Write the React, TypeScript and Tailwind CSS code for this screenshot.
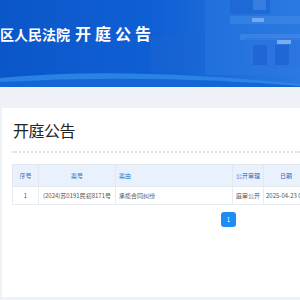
const rows = [
  { no: "1", caseNo: "(2024)苏0191民初8171号", cause: "承揽合同纠纷", open: "庭审公开", date: "2025-04-23 09:00" },
];

function Banner() {
  return (
    <div className="relative h-[87px] overflow-hidden bg-gradient-to-r from-[#0b57c9] via-[#0f5fd4] to-[#2a78e0]">
      <svg className="absolute inset-0" width="300" height="87" viewBox="0 0 300 87">
        <rect x="205" y="0" width="95" height="75" fill="#2f7ee6" opacity="0.35" />
        <rect x="230" y="0" width="40" height="14" fill="#1a62cf" opacity="0.6" />
        <rect x="253" y="0" width="13" height="10" fill="#4b90ea" opacity="0.5" />
        <rect x="230" y="16" width="70" height="8" fill="#4a8fe9" opacity="0.45" />
        <rect x="240" y="34" width="60" height="6" fill="#4a8fe9" opacity="0.5" />
        <rect x="245" y="38" width="55" height="30" fill="#2b73de" opacity="0.55" />
        <rect x="253" y="45" width="14" height="20" fill="#1b5ed0" opacity="0.6" />
        <rect x="275" y="45" width="14" height="20" fill="#1b5ed0" opacity="0.6" />
        <rect x="277" y="40" width="14" height="4" fill="#9cc4f5" opacity="0.7" />
        <rect x="252" y="18" width="12" height="4" fill="#9cc4f5" opacity="0.6" />
        <path d="M150 38 L205 32 L205 70 L150 72 Z" fill="#1a63d2" opacity="0.5" />
        <path d="M0 78 Q 120 66 300 84 L300 87 L0 87 Z" fill="#2e86e6" opacity="0.9" />
        <path d="M0 82 Q 150 74 300 86 L300 87 L0 87 Z" fill="#1466d6" />
      </svg>
      <div className="relative pt-[25px] flex items-end font-bold text-white leading-none whitespace-nowrap">
        <span className="text-[14px]">区人民法院</span>
        <span className="ml-[5px] text-[16px] tracking-[4px]">开庭公告</span>
      </div>
    </div>
  );
}

export default function App() {
  return (
    <div className="w-[300px] h-[300px] overflow-hidden bg-[#eef2f7] [font-family:'Noto_Sans_CJK_SC',sans-serif]">
      <Banner />
      <div className="pt-[21px] pl-[2px]">
        <div className="bg-white h-[189px] pl-[10px] pt-[8px]">
          <h1 className="text-[16px] tracking-[-0.5px] leading-[28px] text-[#222] pl-[1px]">开庭公告</h1>
          <div className="mt-[7px] border-t-2 border-dotted border-[#dedede]" />
          <table className="mt-[11px] w-[296px] table-fixed border-collapse text-[6px] text-[#555]">
            <colgroup>
              <col className="w-[26px]" />
              <col className="w-[77px]" />
              <col className="w-[117px]" />
              <col className="w-[31px]" />
              <col className="w-[45px]" />
            </colgroup>
            <thead>
              <tr className="h-[22px] bg-[#e9f2fc] text-[#2b6cc4]">
                <th className="border border-[#e3e8ee] font-normal">序号</th>
                <th className="border border-[#e3e8ee] font-normal">案号</th>
                <th className="border border-[#e3e8ee] font-normal text-left pl-[3px]">案由</th>
                <th className="border border-[#e3e8ee] font-normal">公开审理</th>
                <th className="border border-[#e3e8ee] font-normal">日期</th>
              </tr>
            </thead>
            <tbody>
              {rows.map((r) => (
                <tr key={r.no} className="h-[18px]">
                  <td className="border border-[#e8ebef] text-center">{r.no}</td>
                  <td className="border border-[#e8ebef] text-center whitespace-nowrap">{r.caseNo}</td>
                  <td className="border border-[#e8ebef] pl-[3px]">{r.cause}</td>
                  <td className="border border-[#e8ebef] text-center">{r.open}</td>
                  <td className="border border-[#e8ebef] whitespace-nowrap pl-[2px] overflow-hidden">{r.date}</td>
                </tr>
              ))}
            </tbody>
          </table>
          <div className="flex pl-[209px] mt-[7px]">
            <div className="w-[15px] h-[15px] rounded-[3px] bg-[#1e8cf0] text-white text-[6px] flex items-center justify-center">1</div>
          </div>
        </div>
      </div>
    </div>
  );
}
